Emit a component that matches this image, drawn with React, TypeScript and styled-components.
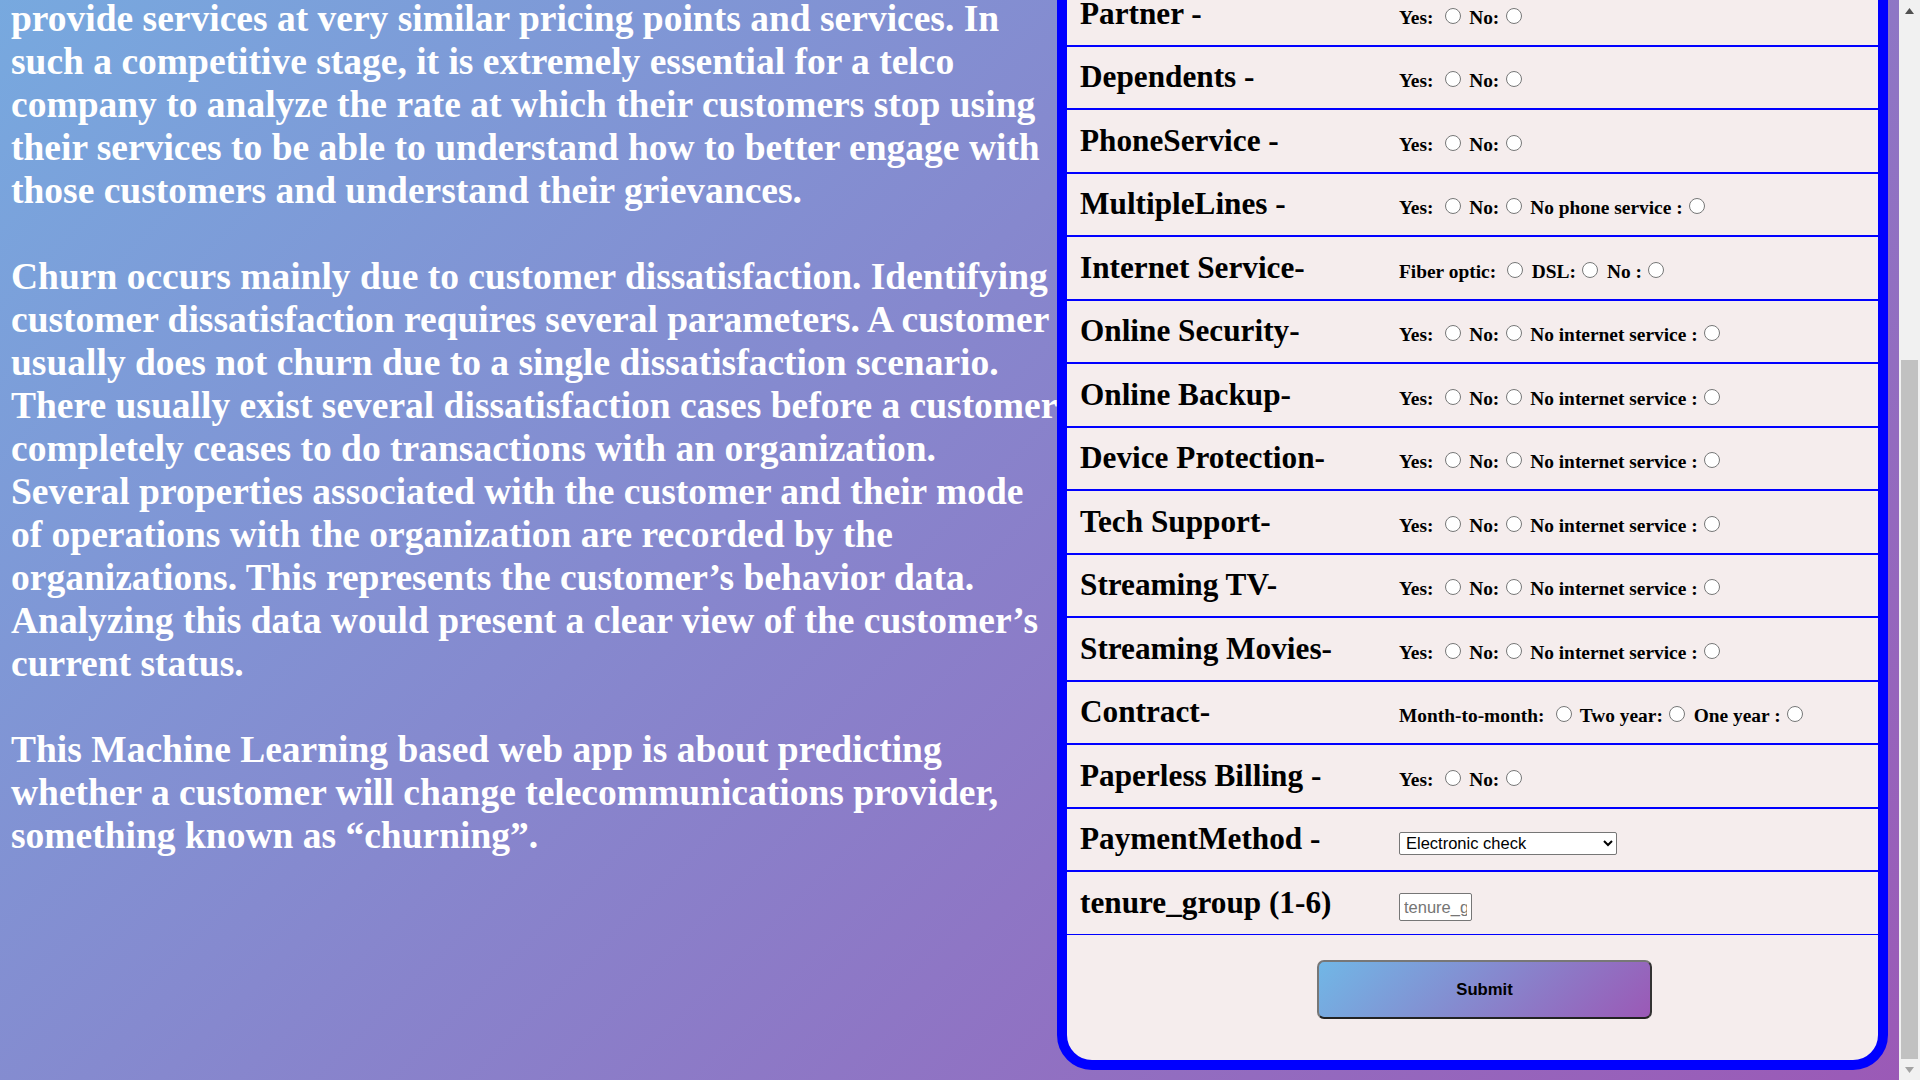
import React, { useLayoutEffect, useState } from 'react';
import styled, { createGlobalStyle } from 'styled-components';

const GlobalStyle = createGlobalStyle`
  html {
    scroll-behavior: auto;
  }
  body {
    margin: 0;
    font-family: "Liberation Serif", "Times New Roman", serif;
    background: linear-gradient(135deg, #71b7e6, #9b59b6);
    color: #fff;
  }
`;

type Row =
  | { label: string; name: string; kind: 'radio'; options: string[] }
  | { label: string; name: string; kind: 'input'; placeholder: string }
  | { label: string; name: string; kind: 'select'; options: string[] };

const yesNo = ['Yes: ', 'No:'];
const internetOpts = ['Yes: ', 'No:', 'No internet service :'];

const ROWS: Row[] = [
  { label: 'SeniorCitizen -', name: 'SeniorCitizen', kind: 'radio', options: yesNo },
  { label: 'MonthlyCharges -', name: 'MonthlyCharges', kind: 'input', placeholder: 'MonthlyCharges' },
  { label: 'TotalCharges -', name: 'TotalCharges', kind: 'input', placeholder: 'TotalCharges' },
  { label: 'Gender -', name: 'gender', kind: 'radio', options: ['Male: ', 'Female:'] },
  { label: 'Partner -', name: 'Partner', kind: 'radio', options: yesNo },
  { label: 'Dependents -', name: 'Dependents', kind: 'radio', options: yesNo },
  { label: 'PhoneService -', name: 'PhoneService', kind: 'radio', options: yesNo },
  { label: 'MultipleLines -', name: 'MultipleLines', kind: 'radio', options: ['Yes: ', 'No:', 'No phone service :'] },
  { label: 'Internet Service-', name: 'InternetService', kind: 'radio', options: ['Fiber optic: ', 'DSL:', 'No :'] },
  { label: 'Online Security-', name: 'OnlineSecurity', kind: 'radio', options: internetOpts },
  { label: 'Online Backup-', name: 'OnlineBackup', kind: 'radio', options: internetOpts },
  { label: 'Device Protection-', name: 'DeviceProtection', kind: 'radio', options: internetOpts },
  { label: 'Tech Support-', name: 'TechSupport', kind: 'radio', options: internetOpts },
  { label: 'Streaming TV-', name: 'StreamingTV', kind: 'radio', options: internetOpts },
  { label: 'Streaming Movies-', name: 'StreamingMovies', kind: 'radio', options: internetOpts },
  { label: 'Contract-', name: 'Contract', kind: 'radio', options: ['Month-to-month: ', 'Two year:', 'One year :'] },
  { label: 'Paperless Billing -', name: 'PaperlessBilling', kind: 'radio', options: yesNo },
  {
    label: 'PaymentMethod -',
    name: 'PaymentMethod',
    kind: 'select',
    options: ['Electronic check', 'Mailed check', 'Bank transfer (automatic)', 'Credit card (automatic)'],
  },
  { label: 'tenure_group (1-6)', name: 'tenure_group', kind: 'input', placeholder: 'tenure_group' },
];

const BUTTON_SIZE = 21;

const App = () => {
  const [thumbHeight, setThumbHeight] = useState(699);

  // the page is shown scrolled down to the end of the form
  useLayoutEffect(() => {
    const doc = document.documentElement;
    window.scrollTo(0, doc.scrollHeight);
    const track = window.innerHeight - BUTTON_SIZE * 2;
    setThumbHeight(Math.round((track * window.innerHeight) / doc.scrollHeight));
  }, []);

  return (
    <>
      <GlobalStyle />
      <Header>
        <Title>Telco Customer Churn Prediction</Title>
      </Header>
      <Columns>
        <Intro>
          <IntroHeading>What is Customer Churn?</IntroHeading>
          <Para>
            The telecommunications sector has become one of<br />
            the key industries in developed countries. Technical<br />
            progress and the increasing number of operators<br />
            have raised the level of competition. Customers have<br />
            a large number of options, and most telecom players<br />
            provide services at very similar pricing points and services. In such a competitive stage, it
            is extremely essential for a telco company to analyze the rate at which their customers stop
            using their services to be able to understand how to better engage with those customers and
            understand their grievances.
          </Para>
          <Para>
            Churn occurs mainly due to customer dissatisfaction. Identifying customer dissatisfaction
            requires several parameters. A customer usually does not churn due to a single
            dissatisfaction scenario. There usually exist several dissatisfaction cases before a customer
            completely ceases to do transactions with an organization. Several properties associated with
            the customer and their mode of operations with the organization are recorded by the
            organizations. This represents the customer’s behavior data. Analyzing this data would
            present a clear view of the customer’s current status.
          </Para>
          <Para>
            This Machine Learning based web app is about predicting whether a customer will change
            telecommunications provider, something known as “churning”.
          </Para>
        </Intro>

        <FormCard onSubmit={(e) => e.preventDefault()}>
          <CardTitle>Enter Customer Details</CardTitle>
          {ROWS.map((row, idx) => (
            <FieldRow key={row.name} last={idx === ROWS.length - 1}>
              <FieldLabel>{row.label}</FieldLabel>
              <Controls>
                {row.kind === 'radio' &&
                  row.options.map((opt, i) => (
                    <React.Fragment key={opt}>
                      {i > 0 && ' '}
                      {opt}
                      <Radio type="radio" name={row.name} value={opt.trim()} />
                    </React.Fragment>
                  ))}
                {row.kind === 'select' && (
                  <Select name={row.name} defaultValue={row.options[0]}>
                    {row.options.map((opt) => (
                      <option key={opt}>{opt}</option>
                    ))}
                  </Select>
                )}
                {row.kind === 'input' && <TextInput name={row.name} placeholder={row.placeholder} />}
              </Controls>
            </FieldRow>
          ))}
          <SubmitRow>
            <SubmitButton type="submit">Submit</SubmitButton>
          </SubmitRow>
        </FormCard>
      </Columns>

      <ScrollBar aria-hidden>
        <ScrollButton>
          <svg width="9" height="6" viewBox="0 0 9 6">
            <polygon points="0,6 9,6 4.5,0" fill="#505050" />
          </svg>
        </ScrollButton>
        <ScrollTrack>
          <ScrollThumb style={{ height: thumbHeight }} />
        </ScrollTrack>
        <ScrollButton>
          <svg width="9" height="6" viewBox="0 0 9 6">
            <polygon points="0,0 9,0 4.5,6" fill="#a3a3a3" />
          </svg>
        </ScrollButton>
      </ScrollBar>
    </>
  );
};

const Header = styled.header`
  height: 170px;
  display: flex;
  align-items: center;
  justify-content: center;
`;

const Title = styled.h1`
  margin: 0;
  font-size: 56px;
  font-weight: bold;
  color: #fff;
`;

const Columns = styled.main`
  display: flex;
  align-items: flex-start;
  padding: 0 32px 10px 11px;
`;

const Intro = styled.section`
  flex: 0 0 1046px;
  width: 1046px;
`;

const IntroHeading = styled.h2`
  margin: 0 0 75.5px;
  height: 60px;
  line-height: 60px;
  font-size: 45px;
  font-weight: bold;
`;

const Para = styled.p`
  margin: 0 0 43px;
  font-size: 37.5px;
  line-height: 43px;
  font-weight: bold;
  color: #fff;
`;

const FormCard = styled.form`
  flex: 0 0 831px;
  width: 831px;
  box-sizing: border-box;
  border: 10px solid #0000ff;
  border-radius: 35px;
  background: #f5eded;
  color: #000;
  overflow: hidden;
`;

const CardTitle = styled.h2`
  margin: 0;
  height: 70px;
  line-height: 70px;
  text-align: center;
  font-size: 36px;
  border-bottom: 2px solid #0000ff;
`;

const FieldRow = styled.div<{ last?: boolean }>`
  display: flex;
  align-items: baseline;
  padding: 12.5px 0 13px 13px;
  border-bottom: ${(p) => (p.last ? '1px' : '2px')} solid #0000ff;
`;

const FieldLabel = styled.div`
  flex: 0 0 319px;
  font-size: 31.25px;
  line-height: 36px;
  font-weight: bold;
`;

const Controls = styled.div`
  font-size: 19.4px;
  font-weight: bold;
  white-space: pre-wrap;
`;

const Radio = styled.input`
  width: 16px;
  height: 16px;
  margin: 3.75px 3.75px 0 6.25px;
  vertical-align: baseline;
`;

const Select = styled.select`
  width: 218px;
  height: 23px;
  padding: 0 0 0 2px;
  font-family: "Liberation Sans", Arial, sans-serif;
  font-size: 16.5px;
  color: #000;
  background: #fff;
  border: 1px solid #767676;
  border-radius: 2px;
`;

const TextInput = styled.input`
  box-sizing: border-box;
  width: 73px;
  height: 28px;
  padding: 1px 4px;
  font-family: "Liberation Sans", Arial, sans-serif;
  font-size: 16.5px;
  border: 1px solid #767676;
  border-radius: 2px;
  background: #fff;

  &::placeholder {
    color: #757575;
  }
`;

const SubmitRow = styled.div`
  display: flex;
  justify-content: center;
  padding: 25px 0 41px 24px;
`;

const SubmitButton = styled.button`
  width: 335px;
  height: 59px;
  font-family: "Liberation Sans", Arial, sans-serif;
  font-size: 16.67px;
  font-weight: bold;
  color: #000;
  background: linear-gradient(135deg, #71b7e6, #9b59b6);
  border: 2px solid;
  border-color: #777 #333 #222 #777;
  border-radius: 7px;
  cursor: pointer;
`;

const ScrollBar = styled.div`
  position: fixed;
  top: 0;
  right: 0;
  width: ${BUTTON_SIZE}px;
  height: 100vh;
  display: flex;
  flex-direction: column;
  background: #f1f1f1;
`;

const ScrollButton = styled.div`
  flex: 0 0 ${BUTTON_SIZE}px;
  display: flex;
  align-items: center;
  justify-content: center;
`;

const ScrollTrack = styled.div`
  flex: 1;
  display: flex;
  flex-direction: column;
  justify-content: flex-end;
  padding: 0 2px;
`;

const ScrollThumb = styled.div`
  background: #c1c1c1;
`;

export default App;
